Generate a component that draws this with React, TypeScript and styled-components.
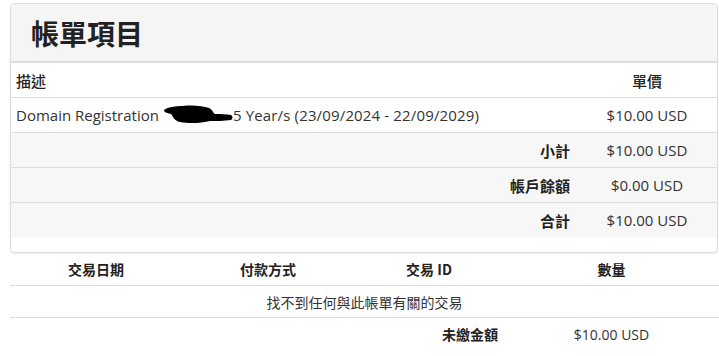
import styled, { createGlobalStyle } from "styled-components";

const GlobalStyle = createGlobalStyle`
  html, body {
    margin: 0;
    padding: 0;
    background: #fff;
  }
  body {
    font-family: "Open Sans", "Noto Sans CJK TC", sans-serif;
    font-size: 14px;
    color: #333;
  }
`;

const Page = styled.div`
  width: 719px;
  padding: 3px 0 0 10px;
  box-sizing: border-box;
`;

const Card = styled.section`
  width: 708px;
  border: 1px solid #ddd;
  border-radius: 4px;
  box-shadow: 0 1px 2px rgba(0, 0, 0, 0.08);
  padding-bottom: 15px;
  box-sizing: border-box;
`;

const CardHeader = styled.header`
  height: 57px;
  background: #f5f5f5;
  border-bottom: 2px solid #ddd;
  border-radius: 4px 4px 0 0;
  display: flex;
  align-items: center;
  padding-left: 20px;
`;

const Title = styled.h1`
  margin: 0;
  font-family: "Noto Sans CJK TC", sans-serif;
  font-size: 28px;
  font-weight: 700;
  color: #222;
`;

const ItemRow = styled.div<{ $shaded?: boolean }>`
  display: grid;
  grid-template-columns: 1fr 140px;
  height: 34px;
  align-items: center;
  font-size: 15px;
  background: ${(p) => (p.$shaded ? "#f7f7f7" : "#fff")};
  & + & {
    border-top: 1px solid #ddd;
  }
`;

const Cell = styled.div<{ $align?: "left" | "right" | "center" }>`
  padding: 0 5px;
  white-space: nowrap;
  display: flex;
  align-items: center;
  justify-content: ${(p) =>
    p.$align === "right" ? "flex-end" : p.$align === "center" ? "center" : "flex-start"};
`;

const HeadLabel = styled.span`
  font-family: "Noto Sans CJK TC", sans-serif;
  font-weight: 500;
  font-size: 15px;
  color: #222;
`;

const SumLabel = styled.span`
  font-family: "Noto Sans CJK TC", sans-serif;
  font-weight: 700;
  font-size: 15px;
  color: #222;
  padding-right: 2px;
`;

// ink scribble covering the domain name
const Redacted = () => (
  <svg width="70" height="20" viewBox="0 0 70 20" style={{ marginLeft: 4 }}>
    <path
      d="M1 5 C5 2 12 1 20 1 C30 0 40 1 46 3 C50 5 50 8 52 9 C58 9 63 9 68 10 C70 11 70 14 68 15 C61 16 53 16 47 16 C39 18 27 19 17 17 C11 16 10 11 8 9 C5 8 1 8 1 5 Z"
      fill="#000"
    />
  </svg>
);

const ItemText = styled.span`
  letter-spacing: 0.15px;
`;

const Txn = styled.div`
  width: 709px;
`;

const TxnRow = styled.div<{ $h: number }>`
  display: grid;
  grid-template-columns: 172px 172px 150px 1fr;
  height: ${(p) => p.$h}px;
  align-items: center;
  & + & {
    border-top: 1px solid #ddd;
  }
`;

const TxnHead = styled.div`
  text-align: center;
  font-family: "Noto Sans CJK TC", sans-serif;
  font-weight: 700;
  font-size: 14px;
  color: #222;
`;

const EmptyNote = styled.div`
  grid-column: 1 / -1;
  text-align: center;
  font-family: "Noto Sans CJK TC", sans-serif;
  font-size: 14px;
`;

const DueLabel = styled.div`
  grid-column: 1 / 4;
  text-align: right;
  padding-right: 6px;
  font-family: "Noto Sans CJK TC", sans-serif;
  font-weight: 700;
  font-size: 14px;
  color: #222;
`;

const DueValue = styled.div`
  text-align: center;
`;

const summary = [
  { label: "小計", value: "$10.00 USD" },
  { label: "帳戶餘額", value: "$0.00 USD" },
  { label: "合計", value: "$10.00 USD" },
];

const App = () => {
  return (
    <>
      <GlobalStyle />
      <Page>
        <Card>
          <CardHeader>
            <Title>帳單項目</Title>
          </CardHeader>
          <ItemRow>
            <Cell>
              <HeadLabel>描述</HeadLabel>
            </Cell>
            <Cell $align="center">
              <HeadLabel>單價</HeadLabel>
            </Cell>
          </ItemRow>
          <ItemRow>
            <Cell>
              Domain Registration
              <Redacted />
              <ItemText>5 Year/s (23/09/2024 - 22/09/2029)</ItemText>
            </Cell>
            <Cell $align="center">$10.00 USD</Cell>
          </ItemRow>
          {summary.map((s) => (
            <ItemRow $shaded key={s.label}>
              <Cell $align="right">
                <SumLabel>{s.label}</SumLabel>
              </Cell>
              <Cell $align="center">{s.value}</Cell>
            </ItemRow>
          ))}
        </Card>
        <Txn>
          <TxnRow $h={32}>
            <TxnHead>交易日期</TxnHead>
            <TxnHead>付款方式</TxnHead>
            <TxnHead>交易 ID</TxnHead>
            <TxnHead>數量</TxnHead>
          </TxnRow>
          <TxnRow $h={31}>
            <EmptyNote>找不到任何與此帳單有關的交易</EmptyNote>
          </TxnRow>
          <TxnRow $h={32}>
            <DueLabel>未繳金額</DueLabel>
            <DueValue>$10.00 USD</DueValue>
          </TxnRow>
        </Txn>
      </Page>
    </>
  );
};

export default App;
